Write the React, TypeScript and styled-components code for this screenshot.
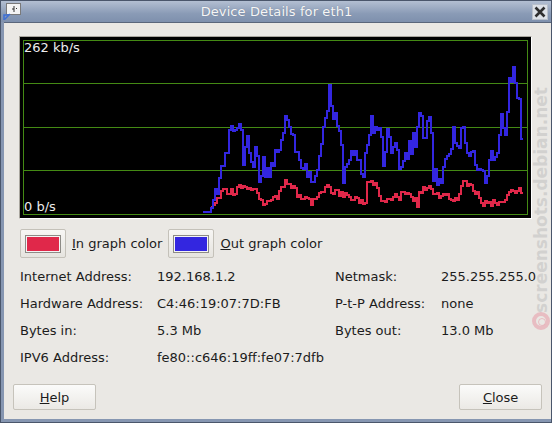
import React from 'react';
import styled, { createGlobalStyle } from 'styled-components';

const GlobalStyle = createGlobalStyle`
  html, body {
    margin: 0;
    padding: 0;
    background: #ffffff;
  }
  body {
    font-family: 'DejaVu Sans', 'Liberation Sans', sans-serif;
    font-size: 13px;
    color: #1c1c1c;
  }
`;

// 그래프 기준점 (페이지 좌표)
const blueKeys: [number, number][] = [
  [203, 212], [210, 212], [212, 203], [217, 188], [222, 165], [227, 150], [228, 137], [233, 130],
  [240, 130], [243, 157], [247, 140], [252, 168], [255, 152], [260, 182], [263, 167], [268, 177],
  [273, 163], [275, 153], [279, 145], [285, 120], [290, 137], [295, 148], [300, 173], [307, 170],
  [310, 187], [315, 178], [318, 157], [323, 127], [329, 93], [332, 120], [335, 120], [340, 143],
  [343, 173], [350, 153], [357, 157], [362, 175], [368, 130], [375, 120], [379, 127], [383, 163],
  [387, 137], [392, 157], [397, 147], [400, 177], [405, 160], [410, 145], [415, 140], [419, 112],
  [423, 137], [427, 122], [431, 127], [433, 173], [438, 180], [443, 170], [448, 160], [453, 135],
  [458, 143], [463, 127], [468, 153], [473, 157], [477, 177], [483, 180], [490, 160], [497, 153],
  [502, 117], [506, 130], [508, 75], [512, 87], [513, 63], [517, 107], [519, 100], [521, 130],
  [522, 160],
];

const redKeys: [number, number][] = [
  [211, 207], [215, 203], [222, 193], [233, 193], [245, 185], [255, 190], [258, 195], [262, 203],
  [273, 200], [280, 193], [285, 183], [295, 185], [298, 198], [310, 202], [320, 193], [328, 188],
  [340, 195], [355, 200], [365, 202], [367, 183], [375, 185], [380, 197], [385, 202], [395, 197],
  [410, 195], [415, 202], [417, 205], [418, 190], [430, 187], [432, 195], [445, 198], [460, 197],
  [462, 183], [470, 185], [477, 192], [480, 203], [500, 203], [510, 193], [518, 190], [522, 195],
];

const OX = 20;
const OY = 37;

const makeRng = (seed: number) => {
  let s = seed;
  return () => {
    s = (s * 1664525 + 1013904223) % 4294967296;
    return s / 4294967296;
  };
};

const interp = (keys: [number, number][], x: number) => {
  for (let i = 0; i < keys.length - 1; i++) {
    const [x0, y0] = keys[i];
    const [x1, y1] = keys[i + 1];
    if (x >= x0 && x <= x1) {
      const t = x1 === x0 ? 0 : (x - x0) / (x1 - x0);
      return y0 + (y1 - y0) * t;
    }
  }
  return keys[keys.length - 1][1];
};

const buildPath = (keys: [number, number][], amp: number, seed: number, quietUntil: number) => {
  const rnd = makeRng(seed);
  const start = keys[0][0];
  const end = keys[keys.length - 1][0];
  let d = `M ${start - OX} ${keys[0][1] - OY}`;
  for (let x = start; x <= end; x += 2) {
    const noise = x < quietUntil ? 0 : (rnd() - 0.5) * amp * 2;
    const y = Math.round(Math.min(213, interp(keys, x) + noise));
    d += ` V ${y - OY} H ${x + 2 - OX}`;
  }
  return d;
};

const bluePath = buildPath(blueKeys, 10, 17, 214);
const redPath = buildPath(redKeys, 4, 91, 216);

const infoRows: [string, string, string, string][] = [
  ['Internet Address:', '192.168.1.2', 'Netmask:', '255.255.255.0'],
  ['Hardware Address:', 'C4:46:19:07:7D:FB', 'P-t-P Address:', 'none'],
  ['Bytes in:', '5.3 Mb', 'Bytes out:', '13.0 Mb'],
  ['IPV6 Address:', 'fe80::c646:19ff:fe07:7dfb', '', ''],
];

const App: React.FC = () => {
  return (
    <>
      <GlobalStyle />
      <Window>
        <TitleBar>
          <TitleIcon>
            <svg width="18" height="18" viewBox="0 0 18 18">
              <rect x="3.5" y="0.5" width="14" height="11" fill="#f4f4f4" stroke="#7a7a7a" />
              <path d="M11 3 V9 M9 6 H11" stroke="#333" strokeWidth="1" />
              <rect x="13" y="5" width="1" height="1" fill="#333" />
              <path d="M1 17 L1 12 L6 12" fill="none" stroke="#3d6fd6" strokeWidth="1.5" />
              <path d="M1.5 16.5 L7 11" stroke="#3d6fd6" strokeWidth="1.5" />
            </svg>
          </TitleIcon>
          <TitleText>Device Details for eth1</TitleText>
          <CloseBox>
            <svg width="14" height="14" viewBox="0 0 14 14">
              <path d="M2.5 2.5 L11.5 11.5 M11.5 2.5 L2.5 11.5" stroke="#2e2e2e" strokeWidth="2.6" />
            </svg>
          </CloseBox>
        </TitleBar>
        <Frame>
          <Content>
            <GraphFrame>
              <svg width="511" height="181" viewBox="0 0 511 181" shapeRendering="crispEdges">
                <rect x="3.5" y="3.5" width="504" height="174" fill="none" stroke="#448a14" />
                {[46.5, 90.5, 133.5].map((y) => (
                  <line key={y} x1="3.5" x2="507.5" y1={y} y2={y} stroke="#448a14" />
                ))}
                <path d={redPath} fill="none" stroke="#e0284a" strokeWidth="2" />
                <path d={bluePath} fill="none" stroke="#3326e0" strokeWidth="2" />
              </svg>
              <GraphLabel $pos="top">262 kb/s</GraphLabel>
              <GraphLabel $pos="bottom">0 b/s</GraphLabel>
            </GraphFrame>

            <ColorRow>
              <ColorButton>
                <Swatch $color="#e0284a" />
              </ColorButton>
              <ColorLabel>
                <u>I</u>n graph color
              </ColorLabel>
              <ColorButton>
                <Swatch $color="#3326e0" />
              </ColorButton>
              <ColorLabel>
                <u>O</u>ut graph color
              </ColorLabel>
            </ColorRow>

            <InfoGrid>
              {infoRows.map((row) =>
                row.map((cell, i) => <InfoCell key={row[0] + i}>{cell}</InfoCell>),
              )}
            </InfoGrid>

            <ButtonRow>
              <DialogButton>
                <u>H</u>elp
              </DialogButton>
              <DialogButton>
                <u>C</u>lose
              </DialogButton>
            </ButtonRow>
          </Content>
        </Frame>
        <Watermark>
          <WatermarkLogo />
          <WatermarkText>screenshots.debian.net</WatermarkText>
        </Watermark>
      </Window>
    </>
  );
};

export default App;

// 창 전체
const Window = styled.div`
  position: relative;
  width: 552px;
  height: 423px;
  box-sizing: border-box;
  border: 1px solid #4a566b;
  background: #8696b1;
  display: flex;
  flex-direction: column;
  overflow: hidden;
`;

// 제목 표시줄
const TitleBar = styled.div`
  height: 21px;
  flex: none;
  display: flex;
  align-items: center;
  padding: 0 2px 0 2px;
  background: linear-gradient(#b3bfd2, #8a9bb6 60%, #7e90ad);
  color: #f6f6f6;
`;

const TitleIcon = styled.div`
  width: 18px;
  height: 18px;
  display: flex;
`;

const TitleText = styled.div`
  flex: 1;
  text-align: center;
  font-size: 13px;
  letter-spacing: 0.1px;
  text-shadow: 0 0 1px rgba(60, 70, 90, 0.4);
`;

const CloseBox = styled.div`
  width: 16px;
  height: 16px;
  margin-right: 1px;
  background: #dde1e7;
  border: 1px solid #b9c0cb;
  box-sizing: border-box;
  display: flex;
  align-items: center;
  justify-content: center;
`;

const Frame = styled.div`
  flex: 1;
  display: flex;
  padding: 0 3px 3px 3px;
`;

// 본문 영역
const Content = styled.div`
  flex: 1;
  background: #eae8e4;
  border-top: 1px solid #5a667b;
  display: flex;
  flex-direction: column;
  padding: 13px 15px 0 15px;
`;

// 그래프
const GraphFrame = styled.div`
  position: relative;
  width: 511px;
  height: 181px;
  background: #000;
  border: 1px solid;
  border-color: #a9a69e #ffffff #ffffff #a9a69e;
  display: flex;
`;

const GraphLabel = styled.div<{ $pos: 'top' | 'bottom' }>`
  position: absolute;
  left: 4px;
  ${(p) => (p.$pos === 'top' ? 'top: 3px;' : 'bottom: 3px;')}
  color: #ececec;
  font-size: 13px;
  line-height: 16px;
`;

// 색상 버튼 줄
const ColorRow = styled.div`
  display: flex;
  align-items: center;
  margin-top: 10px;
  margin-left: 1px;
  height: 29px;
`;

const ColorButton = styled.div`
  width: 46px;
  height: 29px;
  box-sizing: border-box;
  border: 1px solid #c4c1b9;
  border-radius: 2px;
  background: linear-gradient(#f7f6f4, #e6e4df);
  display: flex;
  align-items: center;
  justify-content: center;
`;

const Swatch = styled.div<{ $color: string }>`
  width: 36px;
  height: 18px;
  box-sizing: border-box;
  border: 1px solid #8d8b86;
  box-shadow: inset 0 0 0 1px #f4f4f4;
  background: ${(p) => p.$color};
`;

const ColorLabel = styled.div`
  margin: 0 6px 0 6px;
  font-size: 13px;
`;

// 장치 정보 표
const InfoGrid = styled.div`
  display: grid;
  grid-template-columns: 137px 178px 106px 1fr;
  grid-auto-rows: 27px;
  align-items: center;
  margin-top: 5px;
  margin-left: 1px;
`;

const InfoCell = styled.div`
  font-size: 13px;
  white-space: nowrap;
`;

// 하단 버튼
const ButtonRow = styled.div`
  margin: auto -6px 9px -6px;
  display: flex;
  justify-content: space-between;
`;

const DialogButton = styled.div`
  width: 83px;
  height: 26px;
  box-sizing: border-box;
  border: 1px solid #c6c3bb;
  border-radius: 2px;
  background: linear-gradient(#fbfbfa, #ebe9e5);
  display: flex;
  align-items: center;
  justify-content: center;
  font-size: 13px;
`;

// 워터마크
const Watermark = styled.div`
  position: absolute;
  left: 529px;
  top: 95px;
  width: 22px;
  height: 245px;
  pointer-events: none;
`;

const WatermarkText = styled.div`
  position: absolute;
  left: 11px;
  top: 104px;
  transform: translate(-50%, -50%) rotate(-90deg);
  white-space: nowrap;
  font-family: 'DejaVu Sans', sans-serif;
  font-weight: bold;
  font-size: 17px;
  color: rgba(190, 190, 190, 0.55);
`;

const WatermarkLogo = styled.div`
  position: absolute;
  left: 2px;
  top: 216px;
  width: 18px;
  height: 18px;
  box-sizing: border-box;
  border-radius: 50%;
  border: 4px solid rgba(230, 160, 172, 0.6);
  &::after {
    content: '';
    position: absolute;
    left: 2px;
    top: 2px;
    width: 6px;
    height: 6px;
    border-radius: 50%;
    border: 1px solid rgba(230, 160, 172, 0.6);
  }
`;
